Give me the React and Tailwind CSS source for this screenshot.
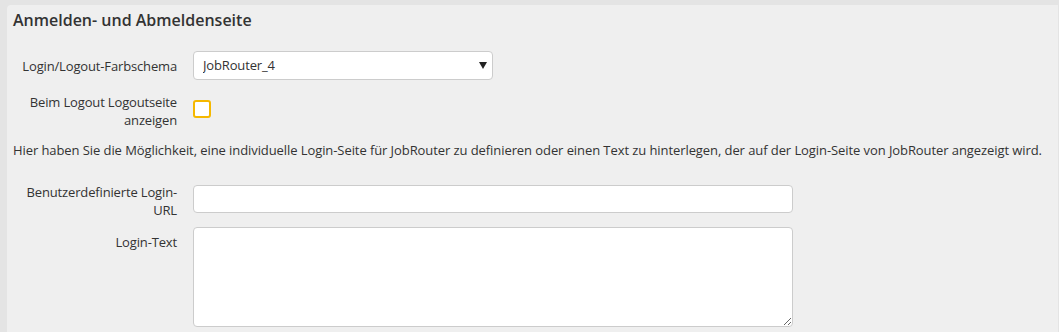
import React from 'react';

// Login / logout settings panel
const Label = ({ children, className = '' }) => (
  <div className={`w-[164px] shrink-0 text-right leading-[18px] tracking-[-0.15px] ${className}`}>{children}</div>
);

export default function App() {
  return (
    <div
      className="h-[332px] w-[1059px] overflow-hidden bg-[#e4e4e4] pl-[7px] pr-[1px] pt-[5px] text-[13px] text-[#333333]"
      style={{ fontFamily: '"Open Sans", "Liberation Sans", sans-serif' }}
    >
      <div className="h-full rounded-tl-[4px] bg-[#efefef] px-[6px] pt-[4px]">
        <h2 className="text-[16px] font-semibold leading-[22px] text-[#333333]">Anmelden- und Abmeldenseite</h2>

        {/* Farbschema */}
        <div className="mt-[20px] flex items-center gap-[16px]">
          <Label>Login/Logout-Farbschema</Label>
          <div className="relative">
            <select
              defaultValue="JobRouter_4"
              className="h-[29px] w-[300px] appearance-none rounded-[4px] border border-[#cccccc] bg-white pl-[9px] text-[13px] tracking-[-0.15px] text-[#333333] outline-none"
              style={{ fontFamily: '"Open Sans", "Liberation Sans", sans-serif' }}
            >
              <option>JobRouter_4</option>
            </select>
            <span className="pointer-events-none absolute right-[6px] top-[11px] h-0 w-0 border-x-[4px] border-t-[7px] border-x-transparent border-t-[#222222]" />
          </div>
        </div>

        {/* Logout checkbox */}
        <div className="mt-[13px] flex items-start gap-[16px]">
          <Label>
            Beim Logout Logoutseite
            <br />
            anzeigen
          </Label>
          <div className="mt-[7px] h-[18px] w-[18px] rounded-[3px] border-2 border-[#f5b800] bg-white" />
        </div>

        <p className="mt-[12px] whitespace-nowrap leading-[18px] tracking-[-0.08px]">
          Hier haben Sie die Möglichkeit, eine individuelle Login-Seite für JobRouter zu definieren oder einen Text zu hinterlegen, der auf der Login-Seite von JobRouter angezeigt wird.
        </p>

        {/* Login URL */}
        <div className="mt-[24px] flex items-start gap-[16px]">
          <Label>
            Benutzerdefinierte Login-
            <br />
            URL
          </Label>
          <input
            type="text"
            className="mt-[2px] h-[28px] w-[600px] rounded-[4px] border border-[#cccccc] bg-white outline-none"
          />
        </div>

        {/* Login text */}
        <div className="mt-[8px] flex items-start gap-[16px]">
          <Label className="pt-[6px]">Login-Text</Label>
          <textarea className="h-[100px] w-[600px] rounded-[4px] border border-[#cccccc] bg-white outline-none" />
        </div>
      </div>
    </div>
  );
}
